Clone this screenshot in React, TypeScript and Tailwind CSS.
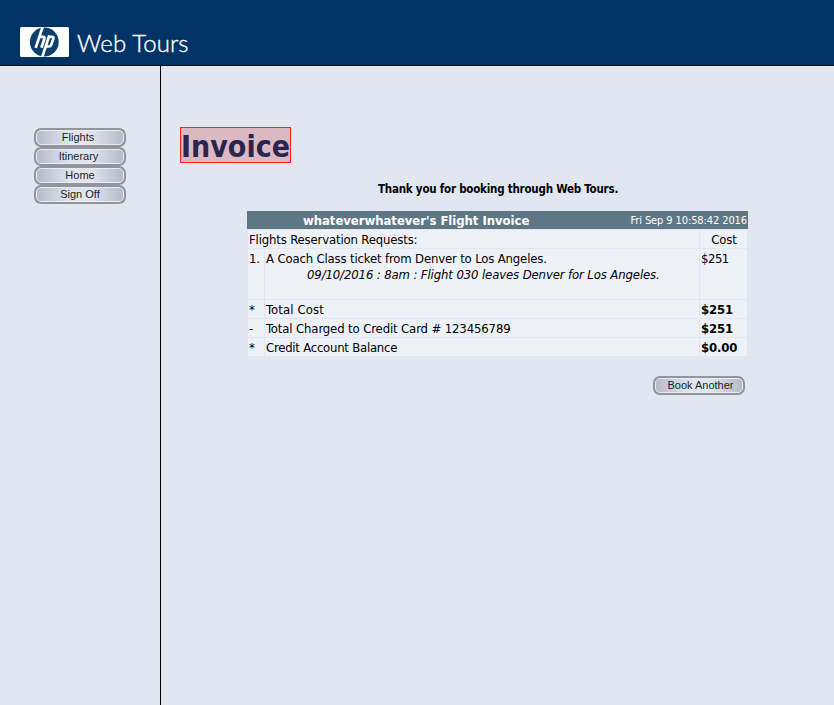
import type { ReactNode } from "react";

const sans = "font-['DejaVu_Sans_Condensed','DejaVu_Sans',sans-serif] [font-stretch:condensed]";

function PillButton({ children, shift = "" }: { children: ReactNode; shift?: string }) {
  return (
    <button className="block h-[19px] w-[92px] rounded-[7px] border-2 border-[#94949c] bg-[#94949c] p-0">
      <span className="flex h-[15px] w-[88px] items-center justify-center rounded-[5px] border border-[#e8edf5] bg-[linear-gradient(to_right,#b6bbc9_0%,#c6cbd8_15%,#e0e6f0_40%,#e0e6f0_62%,#c6cbd8_85%,#b6bbc9_100%)] font-['Liberation_Sans',Arial,sans-serif] text-[11px] leading-none text-[#1c1c1c]">
        <span className={shift}>{children}</span>
      </span>
    </button>
  );
}

function HpLogo() {
  return (
    <svg width="49" height="30" viewBox="0 0 49 30" className="block">
      <rect width="49" height="30" rx="1.5" fill="#fff" />
      <circle cx="24.3" cy="15" r="14.4" fill="#0a3f70" />
      <g stroke="#fff" fill="none" strokeWidth="2.7" strokeLinejoin="round">
        <path d="M22.9 -1 L15.7 20.8" />
        <path d="M19.2 9.8 H23 Q25 9.8 24.4 11.8 L21.4 20.8" />
        <path d="M29.3 8.5 L21.9 31" />
        <path d="M28.5 9.8 H32 Q34 9.8 33.4 11.8 L31.2 17.8 Q30.6 19.5 29 19.5 H25.5" />
      </g>
    </svg>
  );
}

export default function App() {
  return (
    <div className={`flex h-[705px] w-[834px] flex-col overflow-hidden bg-[#e0e7f1] text-black ${sans}`}>
      <header className="flex h-[66px] shrink-0 border-b border-black bg-[#003366] pt-[27px] pl-5">
        <HpLogo />
        <span className="mt-[1px] ml-2 font-['Lato',sans-serif] text-[24px] leading-[30px] font-light tracking-[0.1px] whitespace-nowrap text-white [-webkit-text-stroke:0.35px_#ffffff]">Web Tours</span>
      </header>
      <div className="flex grow">
        <nav className="w-[161px] shrink-0 border-r border-black pt-[62px] pl-[34px]">
          <PillButton shift="-ml-1">Flights</PillButton>
          <PillButton shift="-ml-[3px]">Itinerary</PillButton>
          <PillButton>Home</PillButton>
          <PillButton>Sign Off</PillButton>
        </nav>
        <main className="grow pt-[61px] pl-[19px]">
          <h1 className="flex h-9 w-[111px] items-center border border-[#fb1f24] bg-[#dcb9c2] text-[30px] leading-none font-bold whitespace-nowrap text-[#28264f]">
            <span className="mt-1">Invoice</span>
          </h1>
          <p className="mt-[18px] pl-[198px] text-[11.5px] leading-4 font-bold tracking-[-0.23px] whitespace-nowrap">Thank you for booking through Web Tours.</p>
          <section className="mt-[14px] ml-[67px] w-[501px] text-[13px] leading-[18px] tracking-[-0.16px] whitespace-nowrap">
            <div className="flex h-[18px] justify-between bg-[#5f7784] pr-[1px] pl-14 text-white">
              <b className="leading-5 tracking-[-0.05px]">whateverwhatever's Flight Invoice</b>
              <span className="text-[11px] leading-5 tracking-[-0.1px]">Fri Sep 9 10:58:42 2016</span>
            </div>
            <div className="mx-px mt-px grid grid-cols-[16px_434px_47px] grid-rows-[18px_50px_18px_18px_18px] gap-px [&>div]:bg-[#eef2f8] [&>div]:pt-px [&>div]:pl-px">
              <div className="col-span-2">Flights Reservation Requests:</div>
              <div className="text-center">Cost</div>
              <div>1.</div>
              <div>
                <p>A Coach Class ticket from Denver to Los Angeles.</p>
                <p className="-mt-[2px] pl-[41px] tracking-[-0.12px] italic">09/10/2016 : 8am : Flight 030 leaves Denver for Los Angeles.</p>
              </div>
              <div className="tracking-[-0.5px]">$251</div>
              <div>*</div>
              <div className="tracking-[0.12px]">Total Cost</div>
              <div className="font-bold">$251</div>
              <div>-</div>
              <div className="tracking-[-0.13px]">Total Charged to Credit Card # 123456789</div>
              <div className="font-bold">$251</div>
              <div>*</div>
              <div className="tracking-[-0.24px]">Credit Account Balance</div>
              <div className="font-bold">$0.00</div>
            </div>
          </section>
          <div className="mt-[20px] pl-[473px]">
            <PillButton shift="ml-[3px]">Book Another</PillButton>
          </div>
        </main>
      </div>
    </div>
  );
}
